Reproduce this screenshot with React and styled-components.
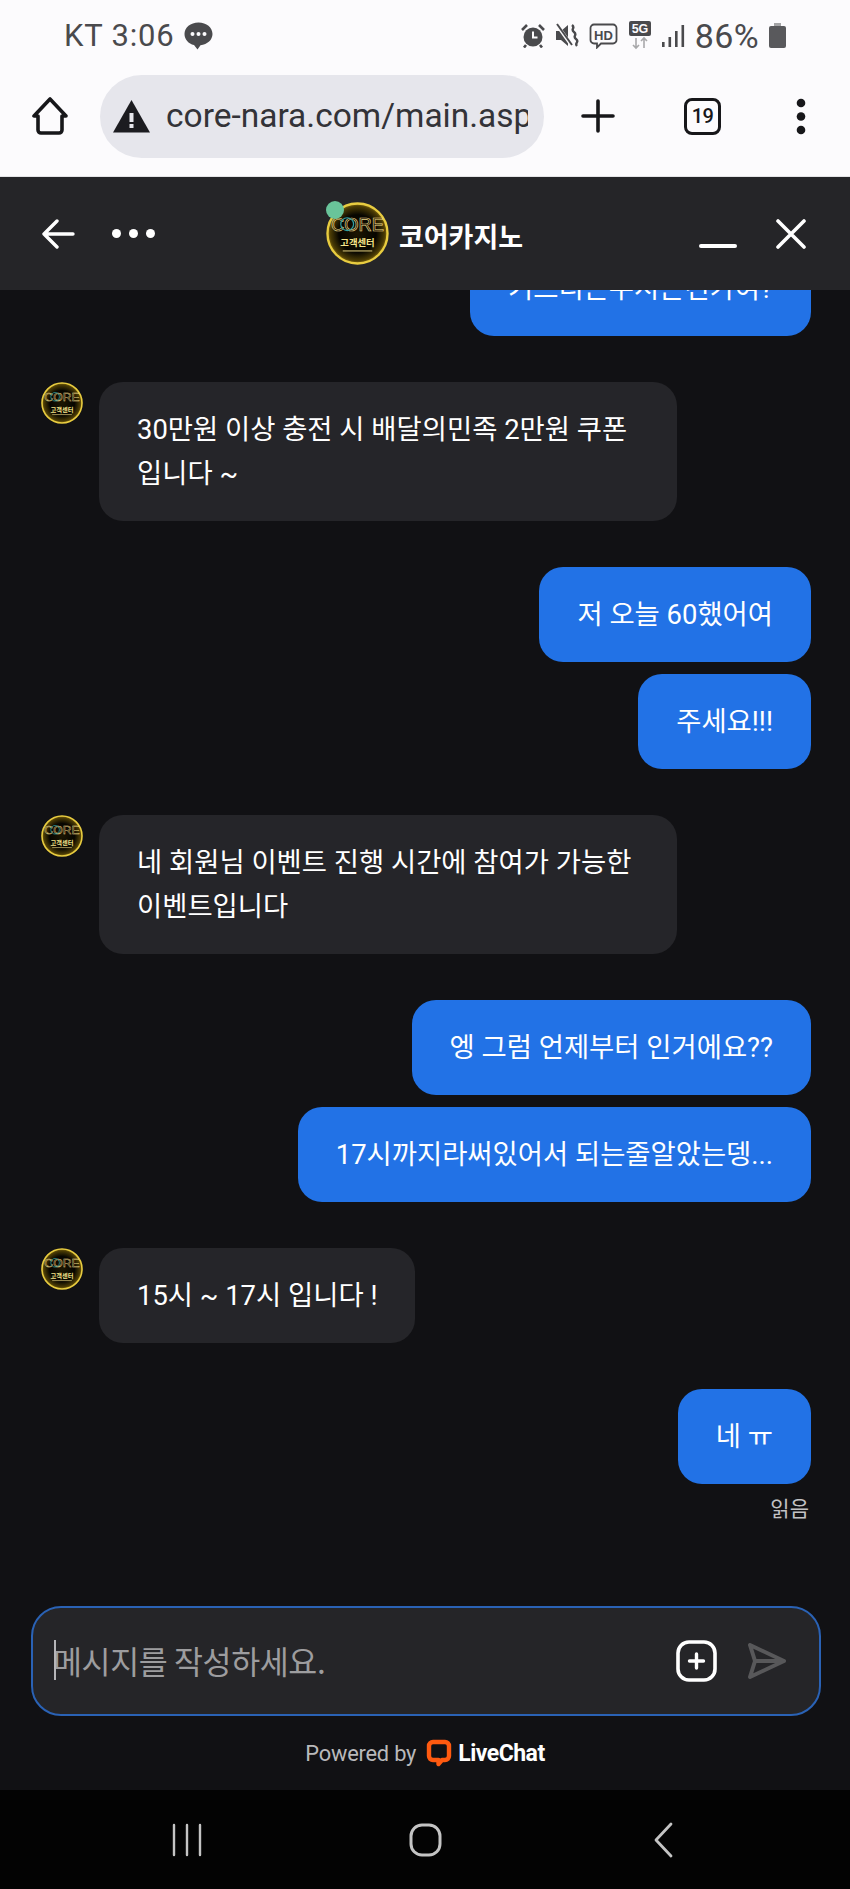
import React from "react";
import styled, { createGlobalStyle } from "styled-components";

const Global = createGlobalStyle`
  html, body { margin: 0; padding: 0; background: #111114; }
  * { box-sizing: border-box; }
  body { font-family: Roboto, "Noto Sans CJK KR", sans-serif; }
`;

const Page = styled.div`
  width: 850px;
  height: 1889px;
  display: flex;
  flex-direction: column;
  overflow: hidden;
  background: #111114;
`;

const StatusBar = styled.div`
  height: 71px;
  flex: none;
  background: #fcfbfd;
  display: flex;
  align-items: center;
  justify-content: space-between;
  padding: 0 64px 0 64px;
  color: #4a4a4d;
`;
const StatusGroup = styled.div`
  display: flex;
  align-items: center;
  gap: ${(p) => p.$gap || 0}px;
`;
const StatusText = styled.span`
  font-size: ${(p) => p.$size}px;
  line-height: 36px;
  letter-spacing: ${(p) => p.$spacing}px;
`;

const BrowserBar = styled.div`
  height: 106px;
  flex: none;
  background: #fcfbfd;
  display: flex;
  align-items: center;
  padding: 0 0 15px 32px;
  border-bottom: 1px solid #e4e4e6;
`;
const UrlPill = styled.div`
  width: 444px;
  height: 83px;
  margin-left: 32px;
  border-radius: 42px;
  background: #e6e6ec;
  display: flex;
  align-items: center;
  padding: 0 16px 0 13px;
  gap: 16px;
  overflow: hidden;
`;
const UrlText = styled.div`
  font-size: 33.5px;
  color: #333338;
  white-space: nowrap;
  overflow: hidden;
  flex: 1;
  line-height: 42px;
`;
const BarIcon = styled.div`
  display: flex;
  justify-content: center;
  margin-left: ${(p) => p.$left}px;
`;
const TabCount = styled.div`
  width: 37px;
  height: 37px;
  margin-left: 69px;
  border: 3.5px solid #17171a;
  border-radius: 8px;
  font-size: 20px;
  font-weight: 500;
  color: #17171a;
  display: flex;
  align-items: center;
  justify-content: center;
  letter-spacing: -0.5px;
`;

const ChatHeader = styled.header`
  height: 113px;
  flex: none;
  background: #252528;
  display: grid;
  grid-template-columns: 1fr auto 1fr;
  align-items: center;
  padding: 0 44px 0 42px;
  position: relative;
  z-index: 2;
`;
const HeaderSide = styled.div`
  display: flex;
  align-items: center;
  justify-content: ${(p) => (p.$end ? "flex-end" : "flex-start")};
  gap: ${(p) => p.$gap}px;
`;
const HeaderCenter = styled.div`
  display: flex;
  align-items: center;
  gap: 10px;
  margin-left: 1px;
`;
const AgentName = styled.div`
  font-size: 27px;
  font-weight: 700;
  color: #fff;
  font-family: "Noto Sans CJK KR", sans-serif;
  line-height: 34px;
  margin-top: 5px;
`;
const LogoWrap = styled.div`
  position: relative;
  width: ${(p) => p.$size}px;
  height: ${(p) => p.$size}px;
  flex: none;
`;
const OnlineDot = styled.span`
  position: absolute;
  left: 0;
  top: -1px;
  width: 18px;
  height: 18px;
  border-radius: 50%;
  background: #69c49a;
`;

const Messages = styled.main`
  flex: 1;
  min-height: 0;
  display: flex;
  flex-direction: column;
  justify-content: flex-end;
  overflow: hidden;
  padding: 0 39px 41px 41px;
`;
const Group = styled.section`
  display: flex;
  flex: none;
  flex-direction: column;
  align-items: ${(p) => (p.$me ? "flex-end" : "flex-start")};
  gap: 12px;
  margin-bottom: 46px;
`;
const AgentRow = styled.div`
  display: flex;
  gap: 16px;
  align-items: flex-start;
`;
const Bubble = styled.div`
  flex: 0 1 auto;
  max-width: 578px;
  padding: 25.5px 38px;
  border-radius: 24px;
  background: ${(p) => (p.$me ? "#2272e6" : "#252529")};
  color: #fff;
  font-size: 27.4px;
  line-height: 44px;
  word-break: keep-all;
  font-family: Roboto, "Noto Sans CJK KR", sans-serif;
`;
const ReadMark = styled.div`
  font-size: 21px;
  line-height: 24px;
  color: #c2c2c4;
  margin: -1px 2px 0 0;
  font-family: "Noto Sans CJK KR", sans-serif;
`;

const Composer = styled.div`
  flex: none;
  height: 110px;
  margin: 0 29px 0 31px;
  border: 2px solid #2a62b5;
  border-radius: 30px;
  background: #252528;
  display: flex;
  align-items: center;
  padding: 0 32px 0 20px;
  gap: 30px;
`;
const Placeholder = styled.div`
  flex: 1;
  font-size: 31.5px;
  line-height: 38px;
  color: #9d9d9f;
  font-family: "Noto Sans CJK KR", sans-serif;
  letter-spacing: -0.4px;
  position: relative;
  margin-top: -2px;
`;
const Caret = styled.span`
  position: absolute;
  left: 1px;
  top: -1px;
  width: 1.5px;
  height: 40px;
  background: #b5b5b8;
`;

const Powered = styled.div`
  flex: none;
  height: 74px;
  display: flex;
  align-items: center;
  justify-content: center;
  gap: 10px;
`;
const PoweredText = styled.span`
  font-size: 21.8px;
  color: #b9b9bb;
  letter-spacing: -0.2px;
`;
const Brand = styled.span`
  font-size: 23px;
  font-weight: 700;
  color: #fff;
  letter-spacing: -0.5px;
  margin-left: -4px;
`;

const NavBar = styled.nav`
  flex: none;
  height: 99px;
  background: #030303;
  display: grid;
  grid-template-columns: repeat(3, 238px);
  justify-content: center;
  align-items: center;
  justify-items: center;
`;

const Logo = ({ size, dot }) => (
  <LogoWrap $size={size}>
    <svg width={size} height={size} viewBox="0 0 64 64">
      <defs>
        <radialGradient id={`g${size}`} cx="50%" cy="50%" r="50%">
          <stop offset="0%" stopColor="#1c1602" />
          <stop offset="62%" stopColor="#060500" />
          <stop offset="90%" stopColor="#4a3b05" />
          <stop offset="100%" stopColor="#8a7010" />
        </radialGradient>
      </defs>
      <circle cx="32" cy="32" r="30.500" fill={`url(#g${size})`} stroke="#e8cc40" strokeWidth="2.400" />
      <text x="32" y="29" textAnchor="middle" fontFamily="Liberation Sans, sans-serif" fontSize="18" fill="none" stroke="#f0dc8c" strokeWidth="0.600" textLength="54" lengthAdjust="spacingAndGlyphs">CORE</text>
      <circle cx="21.500" cy="22.500" r="6.500" fill="none" stroke="#2d9fa3" strokeWidth="1.200" />
      <text x="32" y="45" textAnchor="middle" fontFamily="Noto Sans CJK KR, sans-serif" fontWeight="700" fontSize="9.500" fill="#f4e38a">고객센터</text>
      <rect x="17" y="49" width="30" height="1.400" fill="#a99a5a" />
    </svg>
    {dot && <OnlineDot />}
  </LogoWrap>
);

const Stroke = ({ w, h, box, sw = 3, color = "#fff", d }) => (
  <svg width={w} height={h} viewBox={box} fill="none" stroke={color} strokeWidth={sw} strokeLinecap="round" strokeLinejoin="round">
    <path d={d} />
  </svg>
);

const Chat = () => (
  <svg width="29" height="28" viewBox="0 0 29 28">
    <path d="M14.500 0.500C6.500 0.500 0.500 5.500 0.500 12c0 5.500 4 9.800 9.500 11l3.500 4.500 3-4.300c7-.8 12-5.400 12-11.200 0-6.500-6-11.500-14-11.500z" fill="#4a4a4d" />
    <circle cx="8.500" cy="12" r="2" fill="#fcfbfd" />
    <circle cx="14.500" cy="12" r="2" fill="#fcfbfd" />
    <circle cx="20.500" cy="12" r="2" fill="#fcfbfd" />
  </svg>
);

const Alarm = () => (
  <svg width="24" height="25" viewBox="0 0 24 25">
    <circle cx="12" cy="14" r="9.500" fill="#4a4a4d" />
    <path d="M12 8.500V14.500h4.500" stroke="#fcfbfd" strokeWidth="2" fill="none" />
    <path d="M1 7l5-5M23 7l-5-5M5 22l-2 2.500M19 22l2 2.500" stroke="#4a4a4d" strokeWidth="2.600" />
  </svg>
);
const Mute = () => (
  <svg width="24" height="25" viewBox="0 0 24 25">
    <path d="M1 8h5l7-6v21l-7-6H1z" fill="#4a4a4d" />
    <path d="M2 2l15 21" stroke="#fcfbfd" strokeWidth="3.500" />
    <path d="M2 1l15 21" stroke="#4a4a4d" strokeWidth="2" />
    <path d="M17 2c4 3-2 4 2 7s-2 4 2 7-2 4 1 7" stroke="#4a4a4d" strokeWidth="2.400" fill="none" />
  </svg>
);
const HdBadge = () => (
  <svg width="29" height="26" viewBox="0 0 29 26">
    <path d="M5 1.500h19a3.500 3.500 0 0 1 3.500 3.500v12a3.500 3.500 0 0 1-3.500 3.500H12l-4 4v-4H5A3.500 3.500 0 0 1 1.500 17V5A3.500 3.500 0 0 1 5 1.500z" fill="none" stroke="#4a4a4d" strokeWidth="1.800" />
    <text x="14.500" y="16.500" textAnchor="middle" fontFamily="Liberation Sans, sans-serif" fontWeight="700" fontSize="13" fill="#4a4a4d">HD</text>
  </svg>
);
const FiveG = () => (
  <svg width="24" height="29" viewBox="0 0 24 29">
    <rect x="1" y="0" width="22" height="15" rx="2" fill="#4a4a4d" />
    <text x="12" y="12" textAnchor="middle" fontFamily="Liberation Sans, sans-serif" fontWeight="700" fontSize="12.500" fill="#fcfbfd">5G</text>
    <path d="M8 17v10M5 24l3 3 3-3M16 27V17M13 20l3-3 3 3" fill="none" stroke="#a8a8aa" strokeWidth="1.600" />
  </svg>
);
const Signal = () => (
  <svg width="23" height="24" viewBox="0 0 23 24" fill="#4a4a4d">
    <rect x="0" y="18" width="2.600" height="5" />
    <rect x="6.500" y="13" width="2.600" height="10" />
    <rect x="13" y="7" width="2.600" height="16" />
    <rect x="19.500" y="1" width="2.600" height="22" />
  </svg>
);
const Battery = () => (
  <svg width="17" height="25" viewBox="0 0 17 25">
    <rect x="5" y="0" width="7" height="3" fill="#a4a4a6" />
    <rect x="0" y="3" width="17" height="22" rx="2" fill="#59595c" />
  </svg>
);

const Warning = () => (
  <svg width="37" height="33" viewBox="0 0 37 33">
    <path d="M18.500 0L37 32.500H0z" fill="#1c1c20" />
    <rect x="16.500" y="13" width="4" height="9" fill="#e6e6ec" />
    <rect x="16.500" y="24" width="4" height="4" fill="#e6e6ec" />
  </svg>
);

const Dots = ({ r, gap, color }) => (
  <svg width={r * 6 + gap * 2} height={r * 2} viewBox={`0 0 ${r * 6 + gap * 2} ${r * 2}`} fill={color}>
    <circle cx={r} cy={r} r={r} />
    <circle cx={3 * r + gap} cy={r} r={r} />
    <circle cx={5 * r + 2 * gap} cy={r} r={r} />
  </svg>
);

const VerticalDots = () => (
  <svg width="10" height="37" viewBox="0 0 10 37" fill="#17171a">
    <circle cx="5" cy="5" r="4.300" />
    <circle cx="5" cy="18.500" r="4.300" />
    <circle cx="5" cy="32" r="4.300" />
  </svg>
);

const messages = [
  { me: true, items: ["기프티콘주시는건가여?"] },
  { items: ["30만원 이상 충전 시 배달의민족 2만원 쿠폰 입니다 ~"] },
  { me: true, items: ["저 오늘 60했어여", "주세요!!!"] },
  { items: ["네 회원님 이벤트 진행 시간에 참여가 가능한 이벤트입니다"] },
  { me: true, items: ["엥 그럼 언제부터 인거에요??", "17시까지라써있어서 되는줄알았는뎅..."] },
  { items: ["15시 ~ 17시 입니다 !"] },
  { me: true, items: ["네 ㅠ"], read: true },
];

export default function App() {
  return (
    <Page>
      <Global />
      <StatusBar>
        <StatusGroup $gap={10}>
          <StatusText $size={31} $spacing={0.8}>KT 3:06</StatusText>
          <Chat />
        </StatusGroup>
        <StatusGroup $gap={10}>
          <Alarm />
          <Mute />
          <HdBadge />
          <FiveG />
          <Signal />
          <StatusText $size={34} $spacing={0.4}>86%</StatusText>
          <Battery />
        </StatusGroup>
      </StatusBar>

      <BrowserBar>
        <Stroke w={36} h={38} box="0 0 36 38" sw={3.6} color="#17171a" d="M18 2L2 19h4v14a3 3 0 0 0 3 3h18a3 3 0 0 0 3-3V19h4z" />
        <UrlPill>
          <Warning />
          <UrlText>core-nara.com/main.asp</UrlText>
        </UrlPill>
        <BarIcon $left={37}>
          <Stroke w={34} h={34} box="0 0 34 34" sw={3.6} color="#17171a" d="M17 2v30M2 17h30" />
        </BarIcon>
        <TabCount>19</TabCount>
        <BarIcon $left={75}>
          <VerticalDots />
        </BarIcon>
      </BrowserBar>

      <ChatHeader>
        <HeaderSide $gap={37}>
          <Stroke w={33} h={30} box="0 0 33 30" sw={3.4} d="M2 15h29M15 2L2 15l13 13" />
          <Dots r={4.5} gap={8} color="#fff" />
        </HeaderSide>
        <HeaderCenter>
          <Logo size={63} dot />
          <AgentName>코어카지노</AgentName>
        </HeaderCenter>
        <HeaderSide $end $gap={39}>
          <Stroke w={38} h={30} box="0 0 38 30" sw={4} d="M2 27h34" />
          <Stroke w={30} h={30} box="0 0 30 30" sw={3.6} d="M2 2l26 26M28 2L2 28" />
        </HeaderSide>
      </ChatHeader>

      <Messages>
        {messages.map((g, i) =>
          g.me ? (
            <Group key={i} $me>
              {g.items.map((t) => (
                <Bubble key={t} $me>
                  {t}
                </Bubble>
              ))}
              {g.read && <ReadMark>읽음</ReadMark>}
            </Group>
          ) : (
            <Group key={i}>
              <AgentRow>
                <Logo size={42} />
                <Bubble>{g.items[0]}</Bubble>
              </AgentRow>
            </Group>
          )
        )}
      </Messages>

      <Composer>
        <Placeholder>
          <Caret />
          메시지를 작성하세요.
        </Placeholder>
        <svg width="41" height="42" viewBox="0 0 41 42" fill="none" stroke="#fff" strokeLinecap="round">
          <rect x="2" y="2" width="37" height="38" rx="11" strokeWidth="3.600" />
          <path d="M20.500 14v14M13.500 21h14" strokeWidth="3.400" />
        </svg>
        <Stroke w={40} h={38} box="0 0 40 38" sw={4} color="#58585a" d="M3 3l34 16L3 35l5-16zM8 19h29" />
      </Composer>

      <Powered>
        <PoweredText>Powered by</PoweredText>
        <svg width="26" height="28" viewBox="0 0 26 28">
          <path d="M7 3h12a4 4 0 0 1 4 4v10a4 4 0 0 1-4 4h-3l-3.500 4V21H7a4 4 0 0 1-4-4V7a4 4 0 0 1 4-4z" fill="none" stroke="#ff5a10" strokeWidth="4.400" strokeLinejoin="round" />
        </svg>
        <Brand>LiveChat</Brand>
      </Powered>

      <NavBar>
        <Stroke w={32} h={34} box="0 0 32 34" sw={2.4} color="#c4c4c4" d="M3 2v30M16 2v30M29 2v30" />
        <svg width="33" height="34" viewBox="0 0 33 34" fill="none" stroke="#c4c4c4" strokeWidth="3">
          <rect x="2" y="2" width="29" height="30" rx="11" />
        </svg>
        <Stroke w={20} h={36} box="0 0 20 36" sw={2.8} color="#c4c4c4" d="M18 2L3 18l15 16" />
      </NavBar>
    </Page>
  );
}
